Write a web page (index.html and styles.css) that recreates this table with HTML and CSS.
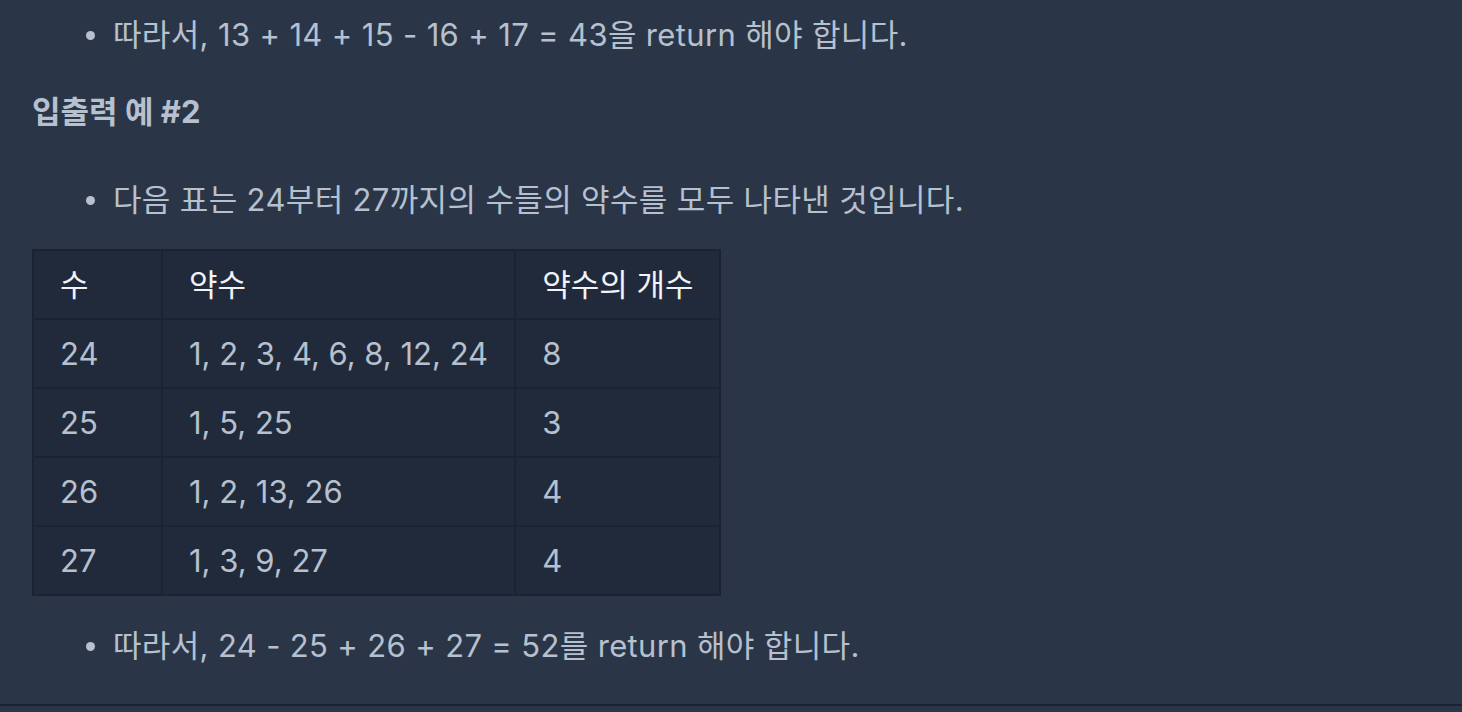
FILE: index.html
```html
<!DOCTYPE html>
<html lang="ko">
<head>
  <meta charset="UTF-8" />
  <meta name="viewport" content="width=device-width, initial-scale=1.0"/>
  <title>입출력 예</title>
  <link rel="stylesheet" href="styles.css">
</head>
<body>
  <div class="markdown">
    <ul class="list first-list">
      <li>따라서, 13 + 14 + 15 - 16 + 17 = 43을 return 해야 합니다.</li>
    </ul>

    <h5 class="example-title">입출력 예 #2</h5>

    <ul class="list">
      <li>다음 표는 24부터 27까지의 수들의 약수를 모두 나타낸 것입니다.</li>
    </ul>

    <table class="divisors">
      <thead>
        <tr>
          <th class="col-num">수</th>
          <th>약수</th>
          <th>약수의 개수</th>
        </tr>
      </thead>
      <tbody>
        <tr><td>24</td><td>1, 2, 3, 4, 6, 8, 12, 24</td><td>8</td></tr>
        <tr><td>25</td><td>1, 5, 25</td><td>3</td></tr>
        <tr><td>26</td><td>1, 2, 13, 26</td><td>4</td></tr>
        <tr><td>27</td><td>1, 3, 9, 27</td><td>4</td></tr>
      </tbody>
    </table>

    <ul class="list last-list">
      <li>따라서, 24 - 25 + 26 + 27 = 52를 return 해야 합니다.</li>
    </ul>
  </div>
  <div class="divider"></div>
</body>
</html>
```

FILE: styles.css
```css
* { margin: 0; padding: 0; box-sizing: border-box; }
html, body { height: 100%; width: 100%; }
body {
  background: #2a3647;
  color: #b6c0ce;
  font-family: Inter, "Noto Sans CJK KR", sans-serif;
  font-size: 31px;
  line-height: 46px;
  overflow: hidden;
}

.markdown {
  padding: 12px 0 35px 32px;
}

.list {
  list-style: none;
  padding-left: 81px;
}

.list li {
  position: relative;
  letter-spacing: 0.35px;
}

.list li::before {
  content: "";
  position: absolute;
  left: -27px;
  top: 19px;
  width: 9px;
  height: 9px;
  border-radius: 50%;
  background: #b6c0ce;
}

.example-title {
  margin-top: 31px;
  font-size: 31px;
  font-weight: 700;
  color: #b6c0ce;
}

.example-title + .list {
  margin-top: 42px;
}

.divisors {
  margin-top: 26px;
  border-collapse: collapse;
  background: #212a3b;
  border: 2px solid #1b2231;
}

.divisors th,
.divisors td {
  border: 2px solid #1b2231;
  padding: 11px 26px 10px;
  text-align: left;
  font-weight: 400;
  white-space: nowrap;
}

.divisors th {
  color: #f1f3f6;
}

.divisors .col-num {
  width: 129px;
}

.last-list {
  margin-top: 27px;
}

.divider {
  height: 2px;
  background: #1b2231;
}
```
